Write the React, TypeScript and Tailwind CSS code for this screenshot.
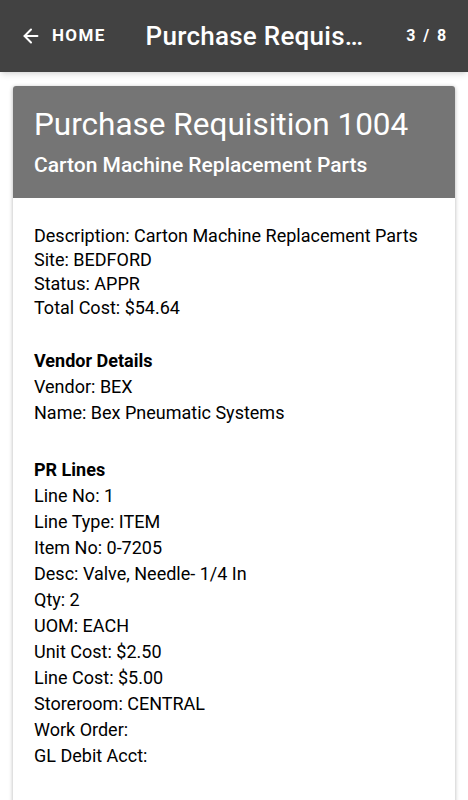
import { ArrowLeft } from "lucide-react";

const summary = [
  "Description: Carton Machine Replacement Parts",
  "Site: BEDFORD",
  "Status: APPR",
  "Total Cost: $54.64",
];
const vendor = ["Vendor: BEX", "Name: Bex Pneumatic Systems"];
const lines = [
  "Line No: 1",
  "Line Type: ITEM",
  "Item No: 0-7205",
  "Desc: Valve, Needle- 1/4 In",
  "Qty: 2",
  "UOM: EACH",
  "Unit Cost: $2.50",
  "Line Cost: $5.00",
  "Storeroom: CENTRAL",
  "Work Order:",
  "GL Debit Acct:",
];

export default function App() {
  return (
    <div className="h-[800px] overflow-hidden bg-white font-['Roboto',sans-serif] text-black">
      <header className="flex h-[72px] items-center bg-[#424242] text-white shadow-md">
        <button className="flex shrink-0 items-center gap-[10px] pl-[20px]">
          <ArrowLeft size={22} strokeWidth={2.2} />
          <span className="text-[17px] font-bold tracking-[0.08em]">HOME</span>
        </button>
        <h1 className="ml-[40px] w-[220px] shrink-0 truncate text-[26px] font-medium tracking-[0.01em]">
          Purchase Requisition 1004
        </h1>
        <span className="ml-auto shrink-0 pr-[20px] text-[16px] font-bold tracking-[0.12em]">3 / 8</span>
      </header>
      <main className="px-[13px] pt-[14px]">
        <section className="overflow-hidden rounded-[3px] bg-white shadow-[0_1px_4px_rgba(0,0,0,0.3)]">
          <div className="bg-[#757575] px-[21px] pt-[20px] pb-[19px] text-white">
            <h2 className="text-[31.5px] leading-[38px]">Purchase Requisition 1004</h2>
            <p className="mt-[7px] text-[21px] font-medium leading-[28px]">Carton Machine Replacement Parts</p>
          </div>
          <div className="px-[21px] pt-[26px] pb-[40px] text-[18px]">
            <div className="leading-[24px]">
              {summary.map((t) => (
                <p key={t}>{t}</p>
              ))}
            </div>
            <div className="mt-[28px] leading-[26px]">
              <p className="font-bold">Vendor Details</p>
              {vendor.map((t) => (
                <p key={t}>{t}</p>
              ))}
            </div>
            <div className="mt-[31px] leading-[26px]">
              <p className="font-bold">PR Lines</p>
              {lines.map((t) => (
                <p key={t}>{t}</p>
              ))}
            </div>
          </div>
        </section>
      </main>
    </div>
  );
}
